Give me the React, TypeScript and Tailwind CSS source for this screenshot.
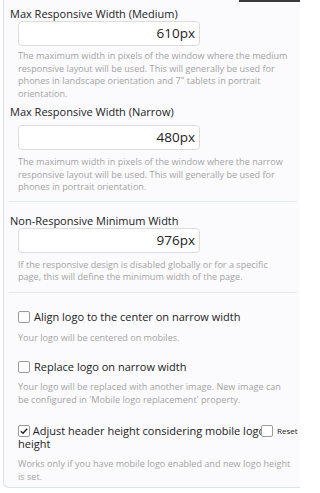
import React from "react";

const font = { fontFamily: '"Open Sans", "Liberation Sans", sans-serif' };

function Box({ checked = false }: { checked?: boolean }) {
  return (
    <span className="inline-flex h-[12px] w-[12px] shrink-0 items-center justify-center rounded-[2px] border border-[#9a9a9a] bg-white align-[-1px]">
      {checked && (
        <svg viewBox="0 0 12 12" className="h-[10px] w-[10px]">
          <path d="M2.2 6.2 L4.8 8.7 L9.8 3.2" fill="none" stroke="#222" strokeWidth="1.7" />
        </svg>
      )}
    </span>
  );
}

function Field({ value }: { value: string }) {
  return (
    <div className="ml-[8px] flex h-[25px] w-[182px] items-center justify-end rounded-[4px] border border-[#dcdcdc] bg-white pr-[4px] text-[13.5px] text-[#222]">
      {value}
    </div>
  );
}

const desc = "ml-[8px] w-[274px] text-[9.1px] leading-[12.5px] text-[#a3a3a3]";

export default function App() {
  return (
    <div className="relative h-[493px] w-[300px] overflow-hidden bg-white" style={font}>
      <div className="absolute right-0 top-0 h-[2px] w-[61px] bg-[#3a3a3a]" />
      <div className="ml-[3px] h-[488px] rounded-bl-[6px] border-b border-l border-[#d9e2ea] bg-[#fbfbfd] pl-[6px]">
        <label className="block pt-[7px] text-[11px] leading-[14px] text-[#222]">
          Max Responsive Width (Medium)
        </label>
        <Field value="610px" />
        <p className={`mt-[4px] ${desc}`}>
          The maximum width in pixels of the window where the medium responsive layout will be used. This will generally be used for phones in landscape orientation and 7" tablets in portrait orientation.
        </p>

        <label className="mt-[5px] block text-[11px] leading-[14px] text-[#222]">
          Max Responsive Width (Narrow)
        </label>
        <div className="mt-[6px]">
          <Field value="480px" />
        </div>
        <p className={`mt-[6px] ${desc}`}>
          The maximum width in pixels of the window where the narrow responsive layout will be used. This will generally be used for phones in portrait orientation.
        </p>

        <div className="ml-[-1px] mt-[7px] h-px w-[288px] bg-[#e1eaf1]" />

        <label className="mt-[12px] block text-[11px] leading-[14px] text-[#222]">
          Non-Responsive Minimum Width
        </label>
        <Field value="976px" />
        <p className={`mt-[6px] ${desc}`}>
          If the responsive design is disabled globally or for a specific page, this will define the minimum width of the page.
        </p>

        <div className="ml-[-1px] mt-[8px] h-px w-[288px] bg-[#e1eaf1]" />

        <div className="ml-[8px] mt-[16px] flex items-center gap-[4px] text-[11px] leading-[16px] text-[#222]">
          <Box />
          <span>Align logo to the center on narrow width</span>
        </div>
        <p className={`mt-[7px] ${desc}`}>Your logo will be centered on mobiles.</p>

        <div className="ml-[8px] mt-[15px] flex items-center gap-[4px] text-[11px] leading-[16px] text-[#222]">
          <Box />
          <span>Replace logo on narrow width</span>
        </div>
        <p className={`mt-[6px] ${desc}`}>
          Your logo will be replaced with another image. New image can be configured in 'Mobile logo replacement' property.
        </p>

        <div className="relative ml-[8px] mt-[18px] w-[274px] text-[11px] leading-[13px] text-[#222]">
          <Box checked /> <span>Adjust header height considering mobile logo height</span>
          <div className="absolute left-[243px] top-[1px] flex items-center gap-[4px] bg-[#fbfbfd] pr-[2px] text-[8px] leading-[12px] text-[#222]">
            <Box />
            <span>Reset</span>
          </div>
        </div>
        <p className="ml-[8px] mt-[7px] w-[278px] text-[9.1px] leading-[13px] text-[#a3a3a3]">
          Works only if you have mobile logo enabled and new logo height is set.
        </p>
      </div>
    </div>
  );
}
